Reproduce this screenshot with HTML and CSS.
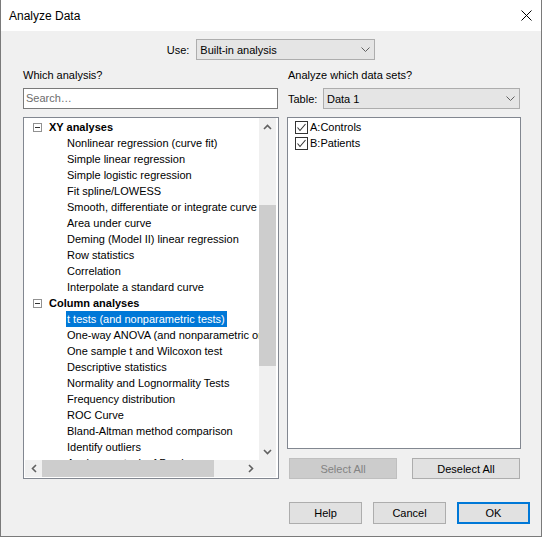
FILE: index.html
```html
<!DOCTYPE html>
<html lang="en">
<head>
    <meta charset="UTF-8">
    <title>Analyze Data</title>
    <link rel="stylesheet" href="styles.css">
</head>
<body>
<div class="dialog">
    <div class="titlebar">
        <span class="title">Analyze Data</span>
        <svg class="close" width="11" height="11" viewBox="0 0 11 11">
            <path d="M0.5 0.5 L10.5 10.5 M10.5 0.5 L0.5 10.5" stroke="#000" stroke-width="1"/>
        </svg>
    </div>

    <div class="use-row">
        <span>Use:</span>
        <div class="select use-select">
            <span>Built-in analysis</span>
            <svg class="chevron" width="9" height="5" viewBox="0 0 9 5"><polyline points="0.5,0.5 4.5,4.5 8.5,0.5" fill="none" stroke="#606060"/></svg>
        </div>
    </div>

    <div class="columns">
        <div class="col col-left">
            <div class="label">Which analysis?</div>
            <div class="search">Search…</div>
            <div class="tree">
                <div class="tree-view">
                    <div class="row head"><span class="minus"></span><b>XY analyses</b></div>
                    <div class="row"><span class="item">Nonlinear regression (curve fit)</span></div>
                    <div class="row"><span class="item">Simple linear regression</span></div>
                    <div class="row"><span class="item">Simple logistic regression</span></div>
                    <div class="row"><span class="item">Fit spline/LOWESS</span></div>
                    <div class="row"><span class="item">Smooth, differentiate or integrate curve</span></div>
                    <div class="row"><span class="item">Area under curve</span></div>
                    <div class="row"><span class="item">Deming (Model II) linear regression</span></div>
                    <div class="row"><span class="item">Row statistics</span></div>
                    <div class="row"><span class="item">Correlation</span></div>
                    <div class="row"><span class="item">Interpolate a standard curve</span></div>
                    <div class="row head"><span class="minus"></span><b>Column analyses</b></div>
                    <div class="row"><span class="item selected">t tests (and nonparametric tests)</span></div>
                    <div class="row"><span class="item">One-way ANOVA (and nonparametric or mixed)</span></div>
                    <div class="row"><span class="item">One sample t and Wilcoxon test</span></div>
                    <div class="row"><span class="item">Descriptive statistics</span></div>
                    <div class="row"><span class="item">Normality and Lognormality Tests</span></div>
                    <div class="row"><span class="item">Frequency distribution</span></div>
                    <div class="row"><span class="item">ROC Curve</span></div>
                    <div class="row"><span class="item">Bland-Altman method comparison</span></div>
                    <div class="row"><span class="item">Identify outliers</span></div>
                    <div class="row"><span class="item">Analyze a stack of P values</span></div>
                </div>
                <div class="vscroll">
                    <div class="arrow"><svg width="9" height="6" viewBox="0 0 9 6"><polyline points="1,5 4.5,1.5 8,5" fill="none" stroke="#606060" stroke-width="1.6"/></svg></div>
                    <div class="track"><div class="thumb-v"></div></div>
                    <div class="arrow"><svg width="9" height="6" viewBox="0 0 9 6"><polyline points="1,1 4.5,4.5 8,1" fill="none" stroke="#606060" stroke-width="1.6"/></svg></div>
                </div>
                <div class="hscroll">
                    <div class="arrow"><svg width="6" height="9" viewBox="0 0 6 9"><polyline points="5,1 1.5,4.5 5,8" fill="none" stroke="#606060" stroke-width="1.6"/></svg></div>
                    <div class="track"><div class="thumb-h"></div></div>
                    <div class="arrow"><svg width="6" height="9" viewBox="0 0 6 9"><polyline points="1,1 4.5,4.5 1,8" fill="none" stroke="#606060" stroke-width="1.6"/></svg></div>
                </div>
                <div class="corner"></div>
            </div>
        </div>

        <div class="col col-right">
            <div class="label">Analyze which data sets?</div>
            <div class="table-row">
                <span class="table-label">Table:</span>
                <div class="select table-select">
                    <span>Data 1</span>
                    <svg class="chevron" width="9" height="5" viewBox="0 0 9 5"><polyline points="0.5,0.5 4.5,4.5 8.5,0.5" fill="none" stroke="#606060"/></svg>
                </div>
            </div>
            <div class="datasets">
                <div class="check-row">
                    <span class="checkbox"><svg width="11" height="11" viewBox="0 0 11 11"><polyline points="1.5,5.5 4,8.5 9.5,2" fill="none" stroke="#333" stroke-width="1.1"/></svg></span>
                    <span>A:Controls</span>
                </div>
                <div class="check-row">
                    <span class="checkbox"><svg width="11" height="11" viewBox="0 0 11 11"><polyline points="1.5,5.5 4,8.5 9.5,2" fill="none" stroke="#333" stroke-width="1.1"/></svg></span>
                    <span>B:Patients</span>
                </div>
            </div>
            <div class="select-buttons">
                <button class="btn btn-wide" disabled>Select All</button>
                <button class="btn btn-wide">Deselect All</button>
            </div>
        </div>
    </div>

    <div class="footer">
        <button class="btn">Help</button>
        <button class="btn">Cancel</button>
        <button class="btn btn-default">OK</button>
    </div>
</div>
</body>
</html>
```

FILE: styles.css
```css
:root {
    --face: #f0f0f0;
    --btn-face: #e1e1e1;
    --btn-border: #adadad;
    --list-border: #828790;
    --scroll-thumb: #cdcdcd;
    --accent: #0078d7;
}
body {
    margin: 0;
    font-family: "Liberation Sans", Arial, sans-serif;
    font-size: 11px;
    color: #000;
    background: #fff;
}
.dialog {
    width: 542px;
    height: 537px;
    box-sizing: border-box;
    border: 1px solid #7a7a7a;
    border-top: none;
    background: var(--face);
    display: flex;
    flex-direction: column;
}
.titlebar {
    height: 31px;
    background: #fff;
    display: flex;
    align-items: center;
    justify-content: space-between;
    padding: 0 9px 0 8px;
}
.title {
    font-size: 12px;
    padding-top: 1px;
}
.close {
    display: block;
    margin-top: -1px;
}

/* top "Use:" line */
.use-row {
    margin-top: 8px;
    display: flex;
    justify-content: center;
    align-items: center;
    gap: 7px;
    height: 21px;
}
.select {
    box-sizing: border-box;
    height: 21px;
    border: 1px solid var(--btn-border);
    background: #e5e5e5;
    display: flex;
    align-items: center;
    justify-content: space-between;
    padding: 0 4px 0 3px;
}
.use-select {
    width: 179px;
}
.chevron {
    display: block;
}

.columns {
    margin-top: 7px;
    padding-left: 22px;
    display: flex;
    gap: 8px;
}
.col {
    display: flex;
    flex-direction: column;
}
.col-left {
    width: 256px;
}
.col-right {
    width: 234px;
}
.label {
    height: 16px;
    line-height: 16px;
}
.col-right .label {
    padding-left: 1px;
}
.search {
    margin-top: 5px;
    width: 255px;
    height: 21px;
    box-sizing: border-box;
    border: 1px solid #7a7a7a;
    background: #fff;
    color: #6d6d6d;
    line-height: 19px;
    padding-left: 2px;
}

/* tree list with scrollbars */
.tree {
    margin-top: 8px;
    height: 362px;
    box-sizing: border-box;
    border: 1px solid var(--list-border);
    background: #fff;
    padding: 0 2px 1px 1px;
    display: grid;
    grid-template-columns: 1fr 17px;
    grid-template-rows: 1fr 17px;
}
.tree-view {
    overflow: hidden;
    white-space: nowrap;
    padding-top: 1px;
}
.row {
    height: 16px;
    line-height: 16px;
    display: flex;
    align-items: center;
}
.item {
    margin-left: 41px;
    padding: 0 2px 0 1px;
}
.selected {
    background: var(--accent);
    color: #fff;
}
.row.head b {
    margin-left: 7px;
}
.minus {
    width: 9px;
    height: 9px;
    box-sizing: border-box;
    border: 1px solid #919191;
    margin-left: 8px;
    position: relative;
}
.minus::after {
    content: "";
    position: absolute;
    left: 1px;
    top: 3px;
    width: 5px;
    height: 1px;
    background: #333;
}
.vscroll {
    background: var(--face);
    display: flex;
    flex-direction: column;
}
.hscroll {
    background: var(--face);
    display: flex;
}
.arrow {
    width: 17px;
    height: 17px;
    flex: none;
    display: flex;
    align-items: center;
    justify-content: center;
}
.track {
    flex: 1;
}
.thumb-v {
    margin-top: 70px;
    height: 161px;
    background: var(--scroll-thumb);
}
.thumb-h {
    width: 172px;
    height: 17px;
    background: var(--scroll-thumb);
}
.corner {
    background: var(--face);
}

/* right side */
.table-row {
    margin-top: 5px;
    display: flex;
    align-items: center;
    padding-left: 1px;
}
.table-label {
    width: 35px;
}
.table-select {
    width: 197px;
}
.datasets {
    margin-top: 8px;
    height: 332px;
    box-sizing: border-box;
    border: 1px solid var(--list-border);
    background: #fff;
    padding: 1px 0 0 7px;
}
.check-row {
    height: 16px;
    display: flex;
    align-items: center;
    gap: 2px;
}
.checkbox {
    width: 13px;
    height: 13px;
    box-sizing: border-box;
    border: 1px solid #333;
    background: #fff;
}
.checkbox svg {
    display: block;
}
.select-buttons {
    margin-top: 9px;
    padding: 0 1px 0 2px;
    display: flex;
    justify-content: space-between;
}

.btn {
    font-family: inherit;
    font-size: 11px;
    color: #000;
    width: 73px;
    height: 22px;
    box-sizing: border-box;
    border: 1px solid var(--btn-border);
    background: var(--btn-face);
    padding: 0;
    margin: 0;
}
.btn-wide {
    width: 108px;
    height: 21px;
}
.btn:disabled {
    background: #cccccc;
    border-color: #bfbfbf;
    color: #838383;
}
.btn-default {
    border: 2px solid var(--accent);
}
.footer {
    margin-top: 23px;
    padding-right: 11px;
    display: flex;
    justify-content: flex-end;
    gap: 11px;
}
```
